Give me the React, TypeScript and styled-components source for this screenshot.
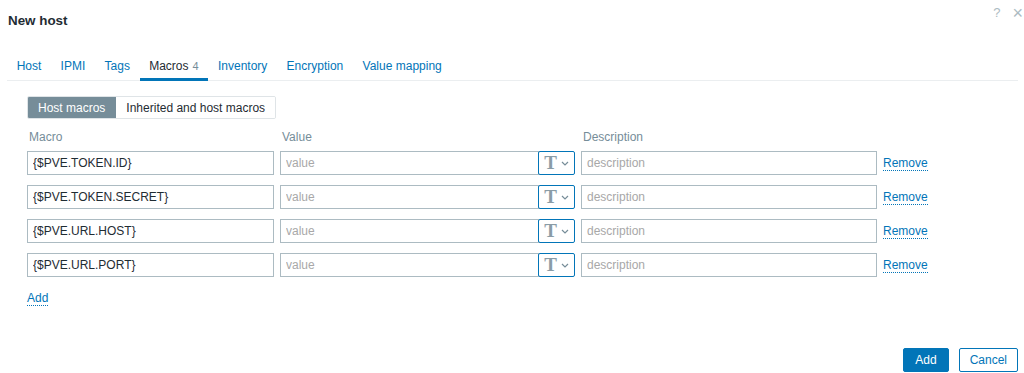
import { createGlobalStyle } from 'styled-components';
import styled from 'styled-components';

const GlobalStyle = createGlobalStyle`
  html, body {
    margin: 0;
    padding: 0;
    background: #ffffff;
  }
  body {
    font-family: "Liberation Sans", Arial, sans-serif;
    font-size: 12px;
    color: #1f2c33;
  }
  * {
    box-sizing: border-box;
  }
`;

const macros = [
  '{$PVE.TOKEN.ID}',
  '{$PVE.TOKEN.SECRET}',
  '{$PVE.URL.HOST}',
  '{$PVE.URL.PORT}',
];

const tabs = [
  { label: 'Host' },
  { label: 'IPMI' },
  { label: 'Tags' },
  { label: 'Macros', count: 4, active: true },
  { label: 'Inventory' },
  { label: 'Encryption' },
  { label: 'Value mapping' },
];

const App = () => {
  return (
    <Dialog>
      <GlobalStyle />
      <Head>
        <Title>New host</Title>
        <HeadIcons>
          <HeadIcon>?</HeadIcon>
          <HeadIcon $big>×</HeadIcon>
        </HeadIcons>
      </Head>

      <TabBar>
        {tabs.map((tab) => (
          <Tab key={tab.label} $active={!!tab.active}>
            {tab.label}
            {tab.count !== undefined && <TabCount>{tab.count}</TabCount>}
          </Tab>
        ))}
      </TabBar>

      <TabBody>
        <Segments>
          <Segment $active>Host macros</Segment>
          <Segment>Inherited and host macros</Segment>
        </Segments>

        <MacroGrid>
          <ColLabel>Macro</ColLabel>
          <ColLabel>Value</ColLabel>
          <ColLabel>Description</ColLabel>
          <span />

          {macros.map((macro) => (
            <Row key={macro}>
              <TextInput defaultValue={macro} />
              <ValueBox>
                <TextInput placeholder="value" />
                <TypeButton>
                  <TypeGlyph>T</TypeGlyph>
                  <svg width="8" height="5" viewBox="0 0 8 5">
                    <path
                      d="M1 1 L4 4 L7 1"
                      fill="none"
                      stroke="#768d99"
                      strokeWidth="1.2"
                    />
                  </svg>
                </TypeButton>
              </ValueBox>
              <TextInput placeholder="description" />
              <LinkButton>Remove</LinkButton>
            </Row>
          ))}
        </MacroGrid>

        <AddRow>
          <LinkButton>Add</LinkButton>
        </AddRow>
      </TabBody>

      <Footer>
        <PrimaryButton>Add</PrimaryButton>
        <SecondaryButton>Cancel</SecondaryButton>
      </Footer>
    </Dialog>
  );
};

export default App;

const Dialog = styled.div`
  width: 1024px;
  height: 373px;
  display: flex;
  flex-direction: column;
  padding: 0 6px 0 7px;
`;

const Head = styled.div`
  height: 41px;
  display: flex;
  align-items: center;
  justify-content: space-between;
`;

const Title = styled.h4`
  margin: 0 0 0 1px;
  font-size: 13.4px;
  font-weight: bold;
  color: #1f2c33;
`;

const HeadIcons = styled.div`
  display: flex;
  gap: 12px;
  align-self: flex-start;
  margin-top: 4px;
  margin-right: -5px;
`;

const HeadIcon = styled.span<{ $big?: boolean }>`
  color: #acbbc2;
  font-size: ${(p) => (p.$big ? '18px' : '13px')};
  line-height: 18px;
`;

const TabBar = styled.div`
  display: flex;
  height: 40px;
  align-items: stretch;
  border-bottom: 1px solid #ebeef0;
`;

const Tab = styled.div<{ $active: boolean }>`
  display: flex;
  align-items: center;
  padding: 12px 9.65px 0;
  color: ${(p) => (p.$active ? '#1f2c33' : '#0275b8')};
  border-bottom: 3px solid ${(p) => (p.$active ? '#0275b8' : 'transparent')};
  margin-bottom: -1px;
`;

const TabCount = styled.span`
  color: #768d99;
  font-size: 11px;
  margin-left: 4px;
`;

const TabBody = styled.div`
  padding: 15px 0 0 20px;
  flex: 1;
`;

const Segments = styled.div`
  display: inline-flex;
  height: 23px;
  border: 1px solid #dfe4e7;
  border-radius: 2px;
  overflow: hidden;
`;

const Segment = styled.div<{ $active?: boolean }>`
  display: flex;
  align-items: center;
  padding: 0 10px;
  background: ${(p) => (p.$active ? '#768d99' : '#ffffff')};
  color: ${(p) => (p.$active ? '#ffffff' : '#1f2c33')};
  border-right: ${(p) => (p.$active ? '1px solid #768d99' : 'none')};
`;

const MacroGrid = styled.div`
  display: grid;
  grid-template-columns: 247px 295px 296px auto;
  column-gap: 6px;
  row-gap: 10px;
  margin-top: 11px;
  align-items: center;
  width: 960px;
`;

const ColLabel = styled.div`
  color: #768d99;
  padding-left: 2px;
  height: 14px;
  line-height: 14px;
  margin-bottom: -3px;
`;

const Row = styled.div`
  display: contents;
`;

const TextInput = styled.input`
  height: 24px;
  width: 100%;
  min-width: 0;
  border: 1px solid #acbbc2;
  border-radius: 0;
  padding: 0 5px;
  font-family: "Liberation Sans", Arial, sans-serif;
  font-size: 12px;
  color: #1f2c33;
  background: #ffffff;
  outline: none;

  &::placeholder {
    color: #a8a8a8;
  }
`;

const ValueBox = styled.div`
  display: flex;
`;

const TypeButton = styled.div`
  flex: none;
  width: 37px;
  height: 24px;
  margin-left: -1px;
  border: 1px solid #0275b8;
  border-radius: 2px;
  display: flex;
  align-items: center;
  justify-content: center;
  gap: 4px;
  background: #ffffff;
`;

const TypeGlyph = styled.span`
  font-family: "Liberation Serif", "Times New Roman", serif;
  font-weight: bold;
  font-size: 19px;
  line-height: 20px;
  color: #8a9ca6;
`;

const LinkButton = styled.span`
  justify-self: start;
  color: #0275b8;
  border-bottom: 1px dotted #0275b8;
  line-height: 14px;
  cursor: pointer;
`;

const AddRow = styled.div`
  margin-top: 14px;
  display: flex;
`;

const Footer = styled.div`
  display: flex;
  justify-content: flex-end;
  gap: 10px;
  padding: 0 0 0;
  margin-right: 0;
  height: 25px;
`;

const PrimaryButton = styled.button`
  height: 24px;
  padding: 0 11px;
  border: 1px solid #0275b8;
  border-radius: 2px;
  background: #0275b8;
  color: #ffffff;
  font-family: "Liberation Sans", Arial, sans-serif;
  font-size: 12px;
`;

const SecondaryButton = styled.button`
  height: 24px;
  padding: 0 10px;
  border: 1px solid #0275b8;
  border-radius: 2px;
  background: #ffffff;
  color: #0275b8;
  font-family: "Liberation Sans", Arial, sans-serif;
  font-size: 12px;
`;
